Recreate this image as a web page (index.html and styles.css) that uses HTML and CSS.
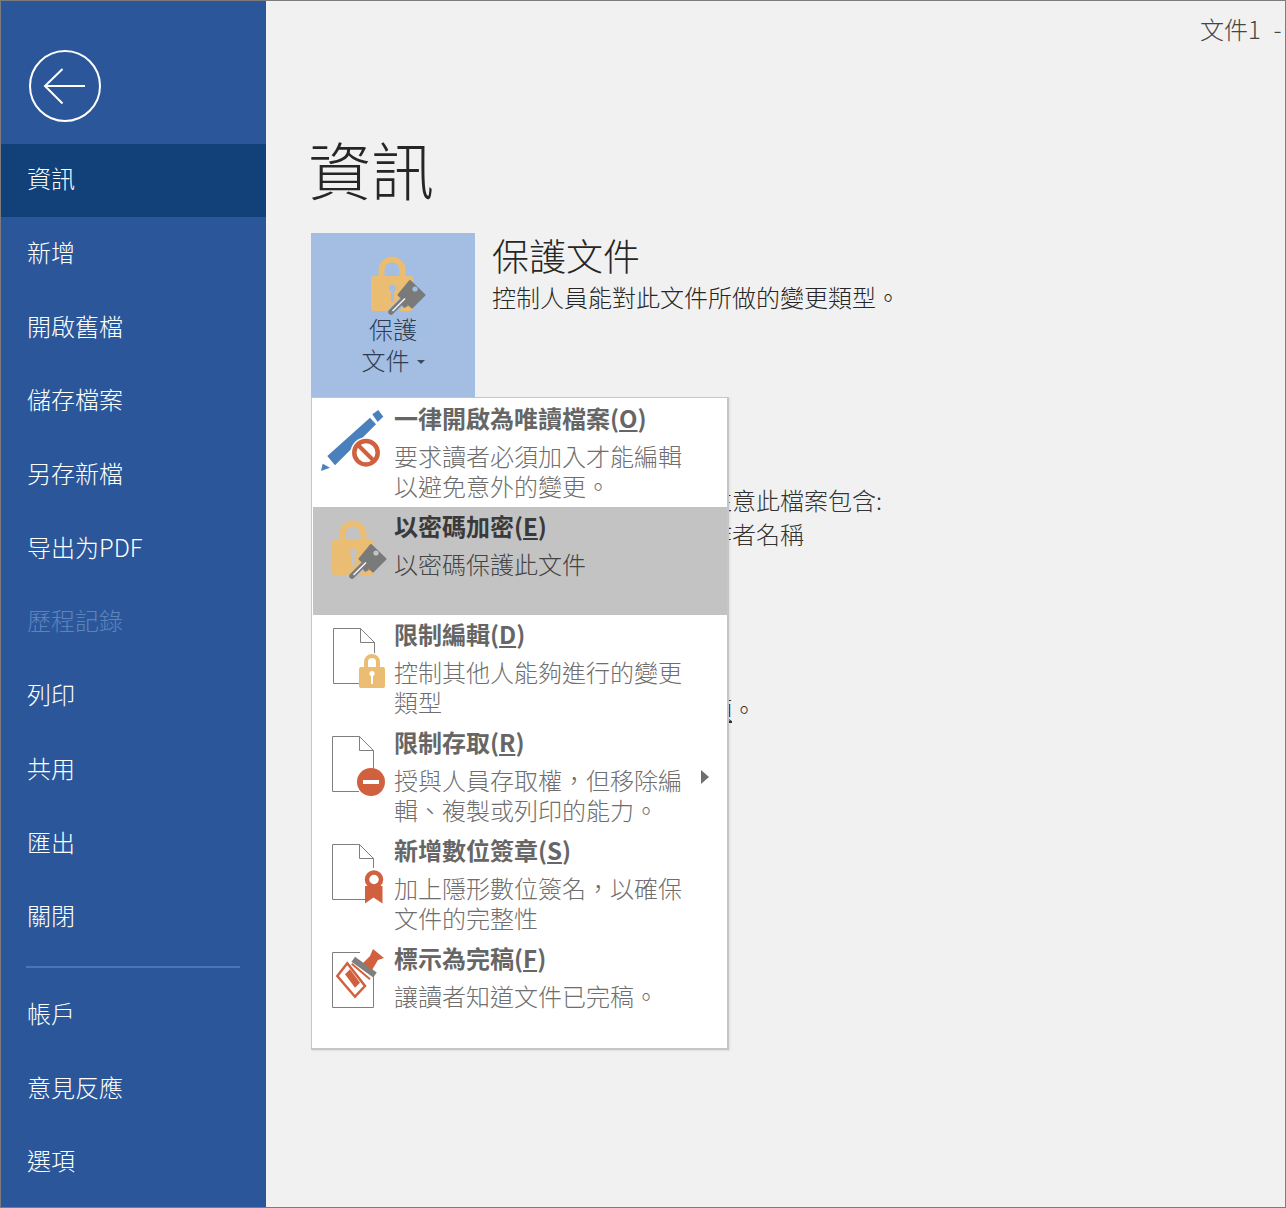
FILE: index.html
```html
<!DOCTYPE html>
<html lang="zh-Hant">
<head>
<meta charset="utf-8">
<title>資訊</title>
<link rel="stylesheet" href="styles.css">
</head>
<body>
<svg class="defs" aria-hidden="true">
  <symbol id="lock-key" viewBox="0 0 56 60">
    <path d="M11.5 22V14a10.5 10.5 0 0 1 21 0V22" fill="none" stroke="#ebbd72" stroke-width="6"/>
    <rect x="1" y="20" width="42" height="35" rx="3" fill="#ebbd72"/>
    <circle cx="22.5" cy="32" r="3.5" class="keyhole"/>
    <rect x="21" y="32" width="3" height="14" class="keyhole"/>
    <path d="M19 59L36 42" stroke="var(--hole)" stroke-width="8"/>
    <path d="M28.5 39L40 25L54.5 39L42 51.5Z" fill="#7a7a7a" stroke="#7a7a7a" stroke-width="2" stroke-linejoin="round"/>
    <circle cx="45" cy="33" r="2.6" fill="var(--hole)"/>
    <path d="M21 56L35 42" stroke="#7a7a7a" stroke-width="5.5" stroke-linecap="round"/>
    <path d="M22.5 55L35 42.5" stroke="#f2f2f2" stroke-width="1.6"/>
    <path d="M31 48l3 4l4 -2l-2 -5z" fill="#7a7a7a"/>
  </symbol>
</svg>

<div class="window">
  <nav class="sidebar">
    <div class="back">
      <svg class="back-icon" width="74" height="74" viewBox="0 0 74 74">
        <circle cx="36" cy="36" r="35" fill="none" stroke="#fff" stroke-width="2"/>
        <path d="M16 36H56M33.5 19L16 36L33.5 53.5" fill="none" stroke="#fff" stroke-width="2"/>
      </svg>
    </div>
    <a class="nav-item active">資訊</a>
    <a class="nav-item">新增</a>
    <a class="nav-item">開啟舊檔</a>
    <a class="nav-item">儲存檔案</a>
    <a class="nav-item">另存新檔</a>
    <a class="nav-item">导出为PDF</a>
    <a class="nav-item disabled">歷程記錄</a>
    <a class="nav-item">列印</a>
    <a class="nav-item">共用</a>
    <a class="nav-item">匯出</a>
    <a class="nav-item">關閉</a>
    <div class="nav-sep"></div>
    <a class="nav-item">帳戶</a>
    <a class="nav-item">意見反應</a>
    <a class="nav-item">選項</a>
  </nav>

  <main class="main">
    <div class="titlebar">文件1  -  Word</div>
    <h1 class="page-title">資訊</h1>

    <section class="protect">
      <div class="protect-btn">
        <svg class="btn-icon" width="56" height="60"><use href="#lock-key"/></svg>
        <div class="btn-label">保護<br>文件<span class="caret"></span></div>
      </div>
      <div class="protect-text">
        <h2 class="protect-title">保護文件</h2>
        <p class="protect-desc">控制人員能對此文件所做的變更類型。</p>
      </div>
    </section>

    <div class="under">
      <p class="under-line">在發佈此檔案前，請注意此檔案包含:</p>
      <p class="under-line indent">文件屬性、路徑和作者名稱</p>
      <p class="under-line manage"><span class="under-link">管理此文件的相關選項</span>。</p>
    </div>

    <div class="menu">
      <div class="menu-item">
        <svg class="menu-icon" width="82" height="108" viewBox="0 0 82 108">
          <path d="M14.3 57L57 18.7L63 25.3L22 66.3Z" fill="#4a80bb"/>
          <path d="M59.3 15.3L65.3 11L70.3 17.7L64.7 23Z" fill="#4a80bb"/>
          <path d="M8 72L9.7 64.7L17 68.7Z" fill="#4a80bb"/>
          <circle cx="53" cy="53.7" r="15.5" fill="#fff"/>
          <circle cx="53" cy="53.7" r="11.7" fill="none" stroke="#d1603f" stroke-width="4.5"/>
          <path d="M45 46L61 62" stroke="#d1603f" stroke-width="4"/>
        </svg>
        <div class="menu-text">
          <div class="menu-title">一律開啟為唯讀檔案(<u>O</u>)</div>
          <div class="menu-desc">要求讀者必須加入才能編輯以避免意外的變更。</div>
        </div>
      </div>

      <div class="menu-item selected">
        <svg class="menu-icon lock-gray" width="82" height="108" viewBox="0 0 82 108">
          <use href="#lock-key" x="18" y="13" width="56" height="60"/>
        </svg>
        <div class="menu-text">
          <div class="menu-title">以密碼加密(<u>E</u>)</div>
          <div class="menu-desc">以密碼保護此文件</div>
        </div>
      </div>

      <div class="menu-item">
        <svg class="menu-icon" width="82" height="108" viewBox="0 0 82 108">
          <path d="M46 68.5H20.5V13.5H47.5L61.5 27.5V38M47.5 13.5V27.5H61.5" fill="none" stroke="#7f7f7f"/>
          <path d="M53 53V47a6 6 0 0 1 12 0V53" fill="none" stroke="#ebbd72" stroke-width="4"/>
          <rect x="46" y="52" width="26" height="21" rx="2" fill="#ebbd72"/>
          <circle cx="59" cy="58.5" r="2.6" fill="#fff"/>
          <rect x="58" y="58" width="2" height="11" fill="#fff"/>
        </svg>
        <div class="menu-text">
          <div class="menu-title">限制編輯(<u>D</u>)</div>
          <div class="menu-desc">控制其他人能夠進行的變更類型</div>
        </div>
      </div>

      <div class="menu-item">
        <svg class="menu-icon" width="82" height="108" viewBox="0 0 82 108">
          <path d="M46 68.5H19.5V13.5H46.5L60.5 27.5V46M46.5 13.5V27.5H60.5" fill="none" stroke="#7f7f7f"/>
          <circle cx="58" cy="59" r="14" fill="#d1603f"/>
          <rect x="50" y="57" width="16" height="4" fill="#fff"/>
        </svg>
        <div class="menu-text">
          <div class="menu-title">限制存取(<u>R</u>)</div>
          <div class="menu-desc">授與人員存取權，但移除編輯、複製或列印的能力。</div>
        </div>
        <span class="submenu-arrow"></span>
      </div>

      <div class="menu-item">
        <svg class="menu-icon" width="82" height="108" viewBox="0 0 82 108">
          <path d="M52 68.5H19.5V13.5H46.5L60.5 27.5V37M46.5 13.5V27.5H60.5" fill="none" stroke="#7f7f7f"/>
          <path d="M52 55V72.5L60.5 66.5L69.5 72.5V55Z" fill="#d1603f"/>
          <circle cx="61" cy="48.5" r="7" fill="#fff" stroke="#d1603f" stroke-width="4.5"/>
        </svg>
        <div class="menu-text">
          <div class="menu-title">新增數位簽章(<u>S</u>)</div>
          <div class="menu-desc">加上隱形數位簽名，以確保文件的完整性</div>
        </div>
      </div>

      <div class="menu-item">
        <svg class="menu-icon" width="82" height="108" viewBox="0 0 82 108">
          <path d="M47 13.5H19.5V68.5H60.5V36" fill="none" stroke="#7f7f7f"/>
          <path d="M40.3 20.3L62 36" stroke="#7f7f7f" stroke-width="6"/>
          <path d="M38.7 24.7L57 40.3" stroke="#d1603f" stroke-width="2"/>
          <path d="M50 24L57 17L60 10L71 19L65 21L59 31Z" fill="#d1603f"/>
          <path d="M24.3 37L34.3 24.3L52 47L42 57.7Z" fill="#fff" stroke="#d1603f" stroke-width="2.5"/>
          <path d="M32 35.3L37 30.3L47 43.7L42 48.7Z" fill="#d1603f"/>
        </svg>
        <div class="menu-text">
          <div class="menu-title">標示為完稿(<u>F</u>)</div>
          <div class="menu-desc">讓讀者知道文件已完稿。</div>
        </div>
      </div>
    </div>
  </main>
</div>
</body>
</html>
```

FILE: styles.css
```css
* { box-sizing: border-box; }

html, body {
  margin: 0;
  padding: 0;
}

body {
  font-family: "Noto Sans CJK TC", "Noto Sans", sans-serif;
  font-weight: 300;
  font-size: 24px;
}

.defs {
  display: none;
}

.keyhole {
  fill: var(--hole);
}

.window {
  width: 1286px;
  height: 1208px;
  display: flex;
  border: 1px solid #7c7c7c;
  background: #f1f1f1;
  overflow: hidden;
  --hole: #a3bde3;
}

.sidebar {
  width: 265px;
  flex: none;
  background: #2b579a;
  color: #fff;
  display: flex;
  flex-direction: column;
}

.back {
  height: 143px;
  padding: 49px 0 0 28px;
}

.back-icon {
  display: block;
}

.nav-item {
  height: 73.7px;
  flex: none;
  display: flex;
  align-items: center;
  padding: 0 0 5px 26px;
  font-size: 24px;
  line-height: 30px;
}

.nav-item.active {
  background: linear-gradient(#124078 73px, #2b579a 73px);
}

.nav-item.disabled {
  color: #5d83bd;
}

.nav-sep {
  height: 2px;
  flex: none;
  margin: 11px 26px 11px 25px;
  background: #4a76b8;
}

.main {
  flex: 1;
  min-width: 0;
  position: relative;
  padding-left: 45px;
}

.titlebar {
  height: 58px;
  margin-left: -45px;
  padding: 11px 0 0 934px;
  font-size: 24px;
  line-height: 34px;
  color: #444;
  white-space: pre;
  word-spacing: 1px;
  overflow: hidden;
}

.page-title {
  margin: 0 0 0 -3px;
  height: 174px;
  padding-top: 64px;
  font-size: 63px;
  line-height: 90px;
  font-weight: 300;
  color: #262626;
}

.protect {
  display: flex;
  gap: 17px;
}

.protect-btn {
  width: 164px;
  height: 164px;
  flex: none;
  background: #a3bde3;
  display: flex;
  flex-direction: column;
  align-items: center;
  padding-top: 23px;
  color: #2f3c4c;
}

.btn-icon {
  display: block;
  margin-left: 10px;
}

.btn-label {
  text-align: center;
  line-height: 31px;
  margin-top: -3px;
}

.caret {
  display: inline-block;
  width: 0;
  height: 0;
  margin-left: 7px;
  border: 4px solid transparent;
  border-top: 4px solid #3c4a5c;
  vertical-align: 2px;
}

.protect-title {
  margin: -2px 0 0;
  font-size: 37px;
  line-height: 48px;
  font-weight: 300;
  color: #262626;
}

.protect-desc {
  margin: 1px 0 0;
  line-height: 34px;
  color: #262626;
  white-space: nowrap;
}

.under {
  margin-top: 86px;
  padding-left: 181px;
  color: #333;
}

.under-line {
  margin: 0;
  line-height: 34px;
  white-space: nowrap;
}

.under-line.indent {
  padding-left: 24px;
}

.under-line.manage {
  margin-top: 141px;
}

.under-link {
  text-decoration: underline;
}

.menu {
  position: absolute;
  left: 45px;
  top: 396px;
  width: 418px;
  height: 653px;
  padding: 1px 0 0 1px;
  background: #fff;
  border: 1px solid #c6c6c6;
  border-right-width: 2px;
  border-bottom-width: 2px;
  box-shadow: 1px 1px 2px rgba(0, 0, 0, 0.08);
}

.menu-item {
  height: 108px;
  display: flex;
}

.menu-item.selected {
  background: #c3c3c3;
  --hole: #c3c3c3;
}

.menu-icon {
  flex: none;
  display: block;
}

.menu-text {
  width: 289px;
  margin-left: -1px;
  flex: none;
  padding-top: 4px;
}

.menu-title {
  font-weight: 700;
  line-height: 30px;
  color: #666;
  white-space: nowrap;
}

.menu-desc {
  margin-top: 8px;
  line-height: 29.5px;
  color: #6e6e6e;
}

.selected .menu-title {
  color: #3a3a3a;
}

.selected .menu-desc {
  color: #444;
}

.submenu-arrow {
  flex: none;
  width: 0;
  height: 0;
  margin: 47px 0 0 18px;
  border-left: 8px solid #6f6f6f;
  border-top: 7.5px solid transparent;
  border-bottom: 7.5px solid transparent;
}
```
